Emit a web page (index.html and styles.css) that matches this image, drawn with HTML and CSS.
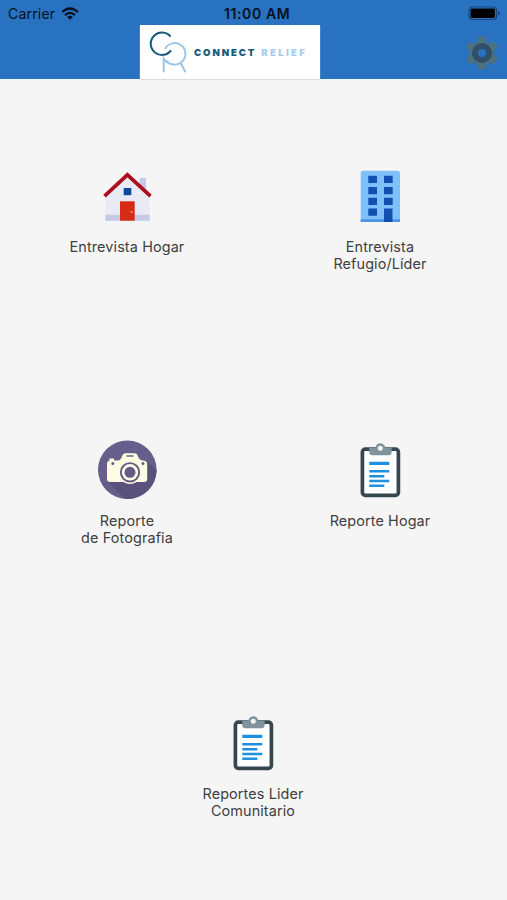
FILE: index.html
```html
<!DOCTYPE html>
<html lang="es">
<head>
<meta charset="utf-8">
<title>Connect Relief</title>
<link rel="stylesheet" href="styles.css">
</head>
<body>
<svg width="0" height="0" class="defs">
  <symbol id="clipboard" viewBox="0 0 60 60">
    <rect x="12.4" y="9.2" width="36" height="46.2" rx="3" fill="#fff" stroke="#37474f" stroke-width="3.7"/>
    <path d="M19.3 7.8H25.5A5 5 0 0 1 35.2 7.8H41.6V12.5Q41.6 15.3 38.6 15.3H22.3Q19.3 15.3 19.3 12.5Z" fill="#81949e"/>
    <circle cx="30.3" cy="8.2" r="3.7" fill="#f5f5f5" stroke="#81949e" stroke-width="2.4"/>
    <path d="M19.3 21.7h20v3.4h-20zM19.3 30h20v2.6h-20zM19.3 34.9h15v2.5h-15zM19.3 39.7h20v2.6h-20zM19.3 44.6h15v2.5h-15z" fill="#1e90e0"/>
  </symbol>
</svg>
<header class="header">
  <div class="status">
    <div class="carrier">Carrier
      <svg class="wifi" viewBox="0 0 18 13"><g fill="none" stroke="#07101c" stroke-width="2.3"><path d="M1.200 5Q9-1.900 16.800 5"/><path d="M4 8.100Q9 3.700 14 8.100"/></g><path d="M6.200 9.900Q9 7.600 11.800 9.900L9 12.700Z" fill="#07101c"/></svg>
    </div>
    <div class="time">11:00 AM</div>
    <svg class="battery" viewBox="0 0 33 15"><rect x="1" y="1" width="27.5" height="12.5" rx="3" fill="none" stroke="#174578" stroke-width="1.2"/><rect x="2.6" y="2.6" width="24.3" height="9.3" rx="1.4" fill="#000"/><path d="M30 5v4.500Q32 8.500 32 7.200T30 5Z" fill="#174578"/></svg>
  </div>
  <div class="bar">
    <div class="logo">
      <svg class="mark" viewBox="0 0 44 44" fill="none" stroke-width="2"><path d="M17 19A10.800 10.800 0 1 1 18 30.300M15.700 42.300V28.500Q18.500 33 23.500 34.200M33 33.500L37.500 42.300" stroke="#9cc6e8"/><path d="M22.600 6.600A11.200 11.200 0 1 0 23 20.300" stroke="#175a7c"/></svg>
      <span class="connect">CONNECT</span><span class="relief">RELIEF</span>
    </div>
    <svg class="gear" viewBox="-17 -17 34 34"><g fill="#4c7180"><circle r="12"/><path id="t" d="M-3.500-16.500H3.500L5-9H-5Z"/><use href="#t" transform="rotate(60)"/><use href="#t" transform="rotate(120)"/><use href="#t" transform="rotate(180)"/><use href="#t" transform="rotate(240)"/><use href="#t" transform="rotate(300)"/></g><circle r="7" fill="#2872c1" stroke="#314f69" stroke-width="6"/></svg>
  </div>
</header>
<main class="menu">
  <a class="tile"><svg class="icon" viewBox="0 0 60 60"><path d="M42.700 12H49V27H42.700Z" fill="#c5cae9"/><path d="M8.300 30L30.300 9L52.700 30V54.700H8.300Z" fill="#e8eaf6"/><path d="M8.300 48.700H52.700V54.700H8.300Z" fill="#c5cae9"/><path d="M7.500 30.200L30.400 8.800L53.500 30.200" fill="none" stroke="#ac0f1e" stroke-width="3.700"/><path d="M26.700 22H34.300V29.200H26.700Z" fill="#0d47a1"/><path d="M23 35.300H37.700V54.700H23Z" fill="#d62c14"/><circle cx="34.500" cy="46" r="1" fill="#ff9a70"/></svg><span>Entrevista Hogar</span></a>
  <a class="tile"><svg class="icon" viewBox="0 0 60 60"><path d="M10.700 56V7.700Q10.700 4.700 13.700 4.700H47Q50 4.700 50 7.700V56Z" fill="#7fc0fa"/><path d="M10.700 53.300H50V56H10.700Z" fill="#4c94e4"/><path d="M18.300 9.700H27V17H18.300ZM34 9.700H42.700V17H34ZM18.300 21H27V28.200H18.300ZM34 21H42.700V28.200H34ZM18.300 31.700H27V39H18.300ZM34 31.700H42.700V39H34ZM18.300 42.500H27V49.700H18.300ZM34 42.500H42.500V56H34Z" fill="#124fb3"/></svg><span>Entrevista<br>Refugio/Líder</span></a>
  <a class="tile"><svg class="icon" viewBox="0 0 60 60"><defs><clipPath id="disc"><circle cx="30.300" cy="29.800" r="29.300"/></clipPath></defs><circle cx="30.300" cy="29.800" r="29.300" fill="#665f8b"/><path clip-path="url(#disc)" d="M11 42L29 60H60V30L48 20Z" fill="#59527c"/><path d="M10 24Q10 21 12.500 20.500V18.500H17V20.500H21Q23.500 20.500 25 16.500Q26 13.300 28.500 13.300H37.500Q40 13.300 41 16.500Q42.500 20.500 46 20.500Q50.200 20.500 50.200 24V39Q50.200 42 47 42H13Q10 42 10 39Z" fill="#fffbe2"/><circle cx="33" cy="32.300" r="11.700" fill="#fffbe2"/><circle cx="33" cy="32.300" r="9.200" fill="#fffbe2" stroke="#625b86" stroke-width="1.900"/><circle cx="33" cy="32.300" r="5.500" fill="#625b86"/><circle cx="15.800" cy="23.500" r="1.500" fill="#625b86"/><circle cx="46" cy="23.500" r="1.500" fill="#625b86"/><path d="M29.500 16H36.500" stroke="#625b86" stroke-width="1.500"/></svg><span>Reporte<br>de Fotografia</span></a>
  <a class="tile"><svg class="icon"><use href="#clipboard"/></svg><span>Reporte Hogar</span></a>
  <a class="tile wide"><svg class="icon"><use href="#clipboard"/></svg><span>Reportes Lider<br>Comunitario</span></a>
</main>
</body>
</html>
```
FILE: styles.css
```css
* { box-sizing: border-box; }
body { margin: 0; height: 900px; display: flex; flex-direction: column; background: #f5f5f5; font-family: Inter, "Liberation Sans", sans-serif; color: #404040; }
.defs { position: absolute; }
.header { height: 79px; background: #2872c1; }
.status { height: 25px; padding: 2px 6px 0 8px; display: grid; grid-template-columns: 216px auto 1fr; align-items: center; font-size: 14px; color: #07101c; }
.carrier { display: flex; align-items: center; gap: 6px; letter-spacing: .2px; }
.wifi { width: 18px; height: 13px; }
.time { font-weight: 600; letter-spacing: .6px; }
.battery { width: 33px; height: 15px; justify-self: end; }
.bar { height: 54px; padding-right: 8px; display: flex; align-items: center; justify-content: space-between; }
.logo { width: 180px; height: 54px; margin-left: 140px; padding-left: 8px; display: flex; align-items: center; background: #fff; box-shadow: 0 1px 1px #ddd; font-size: 9.6px; font-weight: 900; }
.mark { width: 44px; height: 44px; margin-right: 2px; }
.connect { color: #175a7c; letter-spacing: 1.9px; margin-right: 5px; }
.relief { color: #a9cdec; letter-spacing: 2.3px; }
.gear { width: 34px; height: 34px; margin-top: 2px; }
.menu { flex: 1; display: grid; grid-template-columns: 254px 252px; grid-template-rows: repeat(3, 1fr); }
.tile { display: flex; flex-direction: column; align-items: center; gap: 12px; padding-top: 87px; font-size: 14.4px; line-height: 17px; letter-spacing: .12px; text-align: center; }
.icon { width: 60px; height: 60px; }
.wide { grid-column: 1 / -1; }
```
